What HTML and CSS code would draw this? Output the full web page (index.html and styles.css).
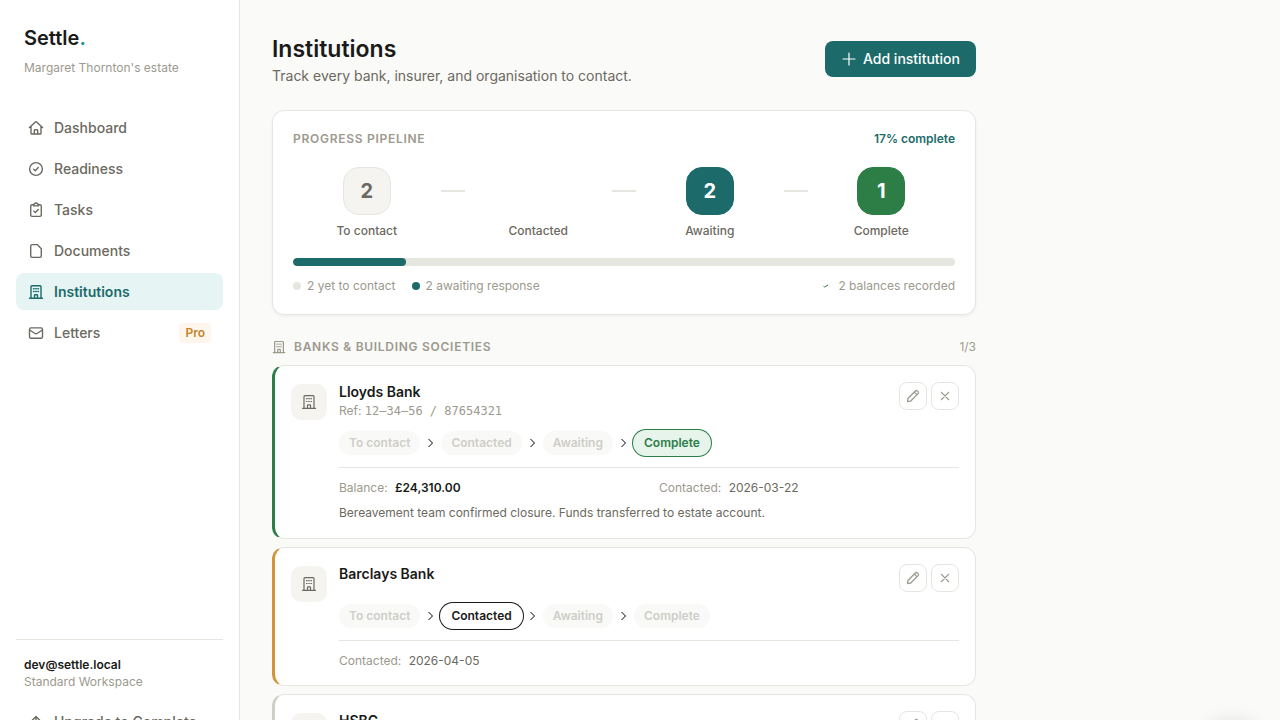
FILE: index.html
```html
<!DOCTYPE html>
<html lang="en">
<head>
<meta charset="utf-8">
<meta name="viewport" content="width=device-width, initial-scale=1">
<title>Institutions – Settle</title>
<link rel="stylesheet" href="styles.css">
</head>
<body>
<svg class="sprite" aria-hidden="true">
  <symbol id="i-home" viewBox="0 0 16 16"><path d="M1.500 7.600 7.400 1.900a.9.9 0 0 1 1.200 0l5.900 5.700M3 6.400v6.800c0 .5.4.8.8.8h8.400c.4 0 .8-.3.8-.8V6.400M6.300 14v-3.400c0-.5.3-.8.8-.8h1.800c.5 0 .8.3.8.8V14"/></symbol>
  <symbol id="i-ready" viewBox="0 0 16 16"><circle cx="8" cy="8" r="6.400"/><path d="m5.700 8.200 1.600 1.500 3-3.200"/></symbol>
  <symbol id="i-tasks" viewBox="0 0 16 16"><path d="M5.600 2.700H4.100c-.8 0-1.400.6-1.400 1.400v9c0 .8.6 1.300 1.400 1.300h7.800c.8 0 1.400-.5 1.400-1.300v-9c0-.8-.6-1.400-1.400-1.400h-1.500"/><path d="M5.600 3.900V2.600c0-.4.3-.6.6-.6h.4a1.500 1.500 0 0 1 2.800 0h.4c.3 0 .6.2.6.6v1.300zM5.900 9.200l1.500 1.400 2.800-3.100"/></symbol>
  <symbol id="i-doc" viewBox="0 0 16 16"><path d="M9.200 1.600H4.100c-.8 0-1.400.6-1.400 1.400v10c0 .8.6 1.400 1.400 1.400h7.800c.8 0 1.400-.6 1.400-1.400V5.700z"/></symbol>
  <symbol id="i-bank" viewBox="0 0 16 16"><path d="M1.500 14.300h13M3 14.300V2.700c0-.6.4-1 1-1h8c.6 0 1 .4 1 1v11.600M6.500 14.300v-3c0-.3.2-.5.5-.5h2c.3 0 .5.2.5.5v3M5.500 4.700h.6M7.700 4.700h.6M9.900 4.700h.6M5.500 7.500h.6M7.700 7.500h.6M9.900 7.500h.6"/></symbol>
  <symbol id="i-mail" viewBox="0 0 16 16"><rect x="1.500" y="2.900" width="13" height="10.400" rx="1.500"/><path d="m1.700 5 5.300 3.500c.6.4 1.400.4 2 0L14.300 5"/></symbol>
  <symbol id="i-up" viewBox="0 0 16 16"><path d="M8 14V2.500M3 7.400l5-5 5 5"/></symbol>
  <symbol id="i-plus" viewBox="0 0 16 16"><path d="M8 2v12M2 8h12"/></symbol>
  <symbol id="i-pen" viewBox="0 0 16 16"><path d="M10.700 2.200a1.700 1.700 0 0 1 2.300 0l.8.8a1.700 1.700 0 0 1 0 2.300L5.200 13.900l-3.400.4.400-3.500zM9.600 3.600l2.800 2.800"/></symbol>
  <symbol id="i-x" viewBox="0 0 16 16"><path d="m3 3 10 10M13 3 3 13"/></symbol>
  <symbol id="i-chev" viewBox="0 0 12 12"><path d="m4 2 4 4-4 4"/></symbol>
  <symbol id="i-tick" viewBox="0 0 12 12"><path d="M3.500 6.300 4.500 7 8 5"/></symbol>
</svg>

<div class="app">
  <aside class="sidebar">
    <div class="brand">
      <div class="logo">Settle<span class="logo-dot">.</span></div>
      <div class="estate">Margaret Thornton's estate</div>
    </div>
    <nav class="nav" aria-label="Main">
      <a class="nav-item" href="#"><svg class="icon"><use href="#i-home"/></svg>Dashboard</a>
      <a class="nav-item" href="#"><svg class="icon"><use href="#i-ready"/></svg>Readiness</a>
      <a class="nav-item" href="#"><svg class="icon"><use href="#i-tasks"/></svg>Tasks</a>
      <a class="nav-item" href="#"><svg class="icon"><use href="#i-doc"/></svg>Documents</a>
      <a class="nav-item active" href="#" aria-current="page"><svg class="icon"><use href="#i-bank"/></svg>Institutions</a>
      <a class="nav-item" href="#"><svg class="icon"><use href="#i-mail"/></svg>Letters<span class="pro">Pro</span></a>
    </nav>
    <div class="account">
      <div class="account-id">
        <div class="email">dev@settle.local</div>
        <div class="workspace">Standard Workspace</div>
      </div>
      <a class="nav-item" href="#"><svg class="icon"><use href="#i-up"/></svg>Upgrade to Complete</a>
    </div>
  </aside>

  <main class="main">
    <header class="page-head">
      <div>
        <h1>Institutions</h1>
        <p class="lead">Track every bank, insurer, and organisation to contact.</p>
      </div>
      <button class="add" type="button"><svg class="icon"><use href="#i-plus"/></svg>Add institution</button>
    </header>

    <section class="pipeline">
      <div class="pipeline-head">
        <h2 class="caps">Progress pipeline</h2>
        <span class="percent">17% complete</span>
      </div>
      <div class="steps">
        <div class="step"><div class="tile">2</div><span>To contact</span></div>
        <div class="link"></div>
        <div class="step"><div class="tile blank"></div><span>Contacted</span></div>
        <div class="link"></div>
        <div class="step"><div class="tile teal">2</div><span>Awaiting</span></div>
        <div class="link"></div>
        <div class="step"><div class="tile green">1</div><span>Complete</span></div>
      </div>
      <div class="bar" role="progressbar" aria-label="Progress" aria-valuenow="17" aria-valuemin="0" aria-valuemax="100"><div class="fill" style="width:17%"></div></div>
      <div class="legend">
        <span class="key"><i class="dot"></i>2 yet to contact</span>
        <span class="key"><i class="dot teal"></i>2 awaiting response</span>
        <span class="key balances"><svg class="tick"><use href="#i-tick"/></svg>2 balances recorded</span>
      </div>
    </section>

    <section class="group">
      <div class="group-head">
        <svg class="icon"><use href="#i-bank"/></svg>
        <h2 class="caps">Banks &amp; building societies</h2>
        <span class="count">1/3</span>
      </div>

      <article class="card done">
        <div class="avatar"><svg class="icon"><use href="#i-bank"/></svg></div>
        <div class="body">
          <div class="card-head">
            <div>
              <h3>Lloyds Bank</h3>
              <p class="ref">Ref: <span class="mono">12–34–56 / 87654321</span></p>
            </div>
            <div class="actions">
              <button type="button" aria-label="Edit Lloyds Bank"><svg class="icon pen"><use href="#i-pen"/></svg></button>
              <button type="button" aria-label="Remove Lloyds Bank"><svg class="icon small"><use href="#i-x"/></svg></button>
            </div>
          </div>
          <div class="stages">
            <button type="button" class="pill">To contact</button><svg class="chev"><use href="#i-chev"/></svg>
            <button type="button" class="pill">Contacted</button><svg class="chev"><use href="#i-chev"/></svg>
            <button type="button" class="pill">Awaiting</button><svg class="chev"><use href="#i-chev"/></svg>
            <button type="button" class="pill on-complete">Complete</button>
          </div>
          <div class="details">
            <div>Balance: <b>£24,310.00</b></div>
            <div>Contacted: <span>2026-03-22</span></div>
            <p>Bereavement team confirmed closure. Funds transferred to estate account.</p>
          </div>
        </div>
      </article>

      <article class="card progress">
        <div class="avatar"><svg class="icon"><use href="#i-bank"/></svg></div>
        <div class="body">
          <div class="card-head">
            <h3>Barclays Bank</h3>
            <div class="actions">
              <button type="button" aria-label="Edit Barclays Bank"><svg class="icon pen"><use href="#i-pen"/></svg></button>
              <button type="button" aria-label="Remove Barclays Bank"><svg class="icon small"><use href="#i-x"/></svg></button>
            </div>
          </div>
          <div class="stages">
            <button type="button" class="pill">To contact</button><svg class="chev"><use href="#i-chev"/></svg>
            <button type="button" class="pill on-contacted">Contacted</button><svg class="chev"><use href="#i-chev"/></svg>
            <button type="button" class="pill">Awaiting</button><svg class="chev"><use href="#i-chev"/></svg>
            <button type="button" class="pill">Complete</button>
          </div>
          <div class="details">
            <div>Contacted: <span>2026-04-05</span></div>
          </div>
        </div>
      </article>

      <article class="card">
        <div class="avatar"><svg class="icon"><use href="#i-bank"/></svg></div>
        <div class="body">
          <div class="card-head">
            <h3>HSBC</h3>
            <div class="actions">
              <button type="button" aria-label="Edit HSBC"><svg class="icon pen"><use href="#i-pen"/></svg></button>
              <button type="button" aria-label="Remove HSBC"><svg class="icon small"><use href="#i-x"/></svg></button>
            </div>
          </div>
        </div>
      </article>
    </section>
  </main>
</div>
<button class="help" type="button" aria-label="Help"></button>
</body>
</html>
```
FILE: styles.css
```css
:root {
  --ink: #1a1a18;
  --text: #6b6960;
  --muted: #9c998e;
  --line: #e6e6e0;
  --soft: #f5f4f0;
  --page: #fafaf8;
  --teal: #1c6b6a;
  --green: #2d7d46;
  --amber: #d4953a;
}
* { box-sizing: border-box; }
html { scrollbar-width: none; }
body {
  margin: 0;
  background: var(--page);
  color: var(--ink);
  font-family: Inter, "Liberation Sans", sans-serif;
  font-size: 14px;
}
h1, h2, h3, p { margin: 0; }
button { font: inherit; cursor: pointer; }
.sprite { display: none; }
.icon {
  width: 16px;
  height: 16px;
  flex: none;
  fill: none;
  stroke: currentColor;
  stroke-width: 1.2;
  stroke-linecap: round;
  stroke-linejoin: round;
}
.app { display: flex; align-items: flex-start; }

/* Sidebar */
.sidebar {
  width: 240px;
  flex: none;
  min-height: calc(100vh + 44px);
  display: flex;
  flex-direction: column;
  padding: 24px 16px;
  background: #fff;
  border-right: 1px solid var(--line);
}
.brand { padding: 0 8px; margin-bottom: 33px; }
.logo { font-size: 20px; line-height: 28px; font-weight: 600; }
.logo-dot { color: #1f8f88; }
.estate { margin-top: 8px; font-size: 12px; line-height: 16px; color: var(--muted); }
.nav { display: flex; flex-direction: column; gap: 4px; }
.nav-item {
  display: flex;
  align-items: center;
  gap: 10px;
  padding: 8px 12px;
  border-radius: 8px;
  line-height: 21px;
  font-weight: 500;
  color: var(--text);
  text-decoration: none;
}
.nav-item .icon { stroke-width: 1.4; }
.nav-item.active { background: #e6f4f4; color: var(--teal); font-weight: 600; }
.pro {
  margin-left: auto;
  padding: 2px 6px;
  border-radius: 4px;
  background: #fef6ec;
  color: #c4842b;
  font-size: 12px;
  line-height: 16px;
  font-weight: 600;
}
.account { margin-top: auto; padding-top: 16px; border-top: 1px solid var(--line); }
.account-id { padding: 0 8px; margin-bottom: 12px; font-size: 12px; }
.email { line-height: 17px; font-weight: 600; }
.workspace { line-height: 18px; color: var(--muted); }

/* Page */
.main { flex: 1; min-width: 0; max-width: 768px; padding: 32px; }
.page-head { display: flex; align-items: center; justify-content: space-between; margin-bottom: 24px; }
h1 { font-size: 23px; line-height: 34px; font-weight: 600; }
.lead { line-height: 20px; color: var(--text); }
.add {
  display: flex;
  align-items: center;
  gap: 6px;
  padding: 8px 16px;
  border: 0;
  border-radius: 8px;
  background: var(--teal);
  color: #fff;
  font-weight: 500;
  line-height: 20px;
}
.caps {
  font-size: 12px;
  font-weight: 600;
  letter-spacing: 0.06em;
  text-transform: uppercase;
  color: var(--muted);
}

/* Pipeline */
.pipeline {
  padding: 20px;
  margin-bottom: 24px;
  background: #fff;
  border: 1px solid var(--line);
  border-radius: 12px;
  box-shadow: 0 1px 3px rgba(0, 0, 0, .06);
  font-size: 12px;
  line-height: 16px;
}
.pipeline-head { display: flex; justify-content: space-between; margin-bottom: 20px; }
.percent { color: var(--teal); font-weight: 600; }
.steps { display: flex; margin-bottom: 19px; }
.step {
  flex: 1;
  display: flex;
  flex-direction: column;
  align-items: center;
  gap: 8px;
  color: var(--text);
  font-weight: 500;
}
.tile {
  width: 48px;
  height: 48px;
  display: grid;
  place-items: center;
  border: 1px solid var(--line);
  border-radius: 16px;
  background: var(--soft);
  font-size: 20px;
  font-weight: 700;
}
.tile.blank { background: none; border-color: transparent; }
.tile.teal { background: var(--teal); border-color: var(--teal); color: #fff; }
.tile.green { background: var(--green); border-color: var(--green); color: #fff; }
.link { width: 24px; height: 2px; margin-top: 23px; background: var(--line); }
.bar { height: 8px; border-radius: 4px; background: var(--line); overflow: hidden; }
.fill { height: 100%; border-radius: 4px; background: var(--teal); }
.legend { display: flex; gap: 16px; margin-top: 12px; color: var(--muted); }
.key { display: flex; align-items: center; gap: 6px; }
.balances { margin-left: auto; }
.dot { width: 8px; height: 8px; border-radius: 50%; background: var(--line); }
.dot.teal { background: var(--teal); }
.tick { width: 12px; height: 12px; fill: none; stroke: var(--green); }

/* Institution cards */
.group { display: flex; flex-direction: column; gap: 8px; }
.group-head {
  display: flex;
  align-items: center;
  gap: 8px;
  padding-bottom: 2px;
  line-height: 16px;
  color: var(--muted);
}
.group-head .icon { width: 14px; height: 14px; stroke-width: 1.4; }
.count { margin-left: auto; font-size: 12px; }
.card {
  display: flex;
  gap: 12px;
  padding: 16px;
  background: #fff;
  border: 1px solid var(--line);
  border-left: 3px solid #d0cfc5;
  border-radius: 12px;
}
.card.done { border-left-color: var(--green); }
.card.progress { border-left-color: var(--amber); }
.avatar {
  flex: none;
  width: 36px;
  height: 36px;
  margin-top: 2px;
  display: grid;
  place-items: center;
  border-radius: 10px;
  background: var(--soft);
  color: var(--text);
}
.body { flex: 1; min-width: 0; }
.card-head { display: flex; justify-content: space-between; align-items: flex-start; }
h3 { font-size: 14px; line-height: 20px; font-weight: 600; }
.ref { font-size: 12px; line-height: 17px; color: var(--muted); }
.mono { font-family: "DejaVu Sans Mono", monospace; line-height: 1; }
.actions { display: flex; gap: 4px; }
.actions button {
  width: 28px;
  height: 28px;
  display: grid;
  place-items: center;
  padding: 0;
  border: 1px solid var(--line);
  border-radius: 8px;
  background: #fff;
  color: var(--muted);
}
.icon.pen { width: 14px; height: 14px; stroke-width: 1.5; }
.icon.small { width: 12px; height: 12px; stroke-width: 1.5; }
.stages { display: flex; align-items: center; gap: 4px; margin-top: 12px; }
.pill {
  padding: 4px 10px;
  border: 0;
  border-radius: 14px;
  background: #f9f9f7;
  color: #cfcec9;
  font-size: 12px;
  line-height: 16px;
  font-weight: 600;
}
.on-complete { background: #e6f4ec; color: var(--green); box-shadow: 0 0 0 1px #e6f4ec, 0 0 0 2px var(--green); }
.on-contacted { background: #fff; color: var(--ink); box-shadow: 0 0 0 1px #fff, 0 0 0 2px var(--ink); }
.chev { width: 13px; height: 12px; fill: none; stroke: #000; }
.details {
  display: grid;
  grid-template-columns: 1fr 1fr;
  gap: 8px 20px;
  margin-top: 12px;
  padding-top: 12px;
  border-top: 1px solid var(--line);
  font-size: 12px;
  line-height: 16px;
  color: var(--muted);
}
.details span, .details b { margin-left: 4px; color: var(--text); }
.details b { color: var(--ink); font-weight: 600; }
.details p { grid-column: 1 / -1; line-height: 18px; color: var(--text); }

/* Floating help button, parked just below the window edge */
.help {
  position: fixed;
  right: 24px;
  bottom: -50px;
  width: 48px;
  height: 48px;
  border: 0;
  border-radius: 50%;
  background: var(--teal);
  box-shadow: 0 0 20px rgba(0, 0, 0, .15);
}
```
